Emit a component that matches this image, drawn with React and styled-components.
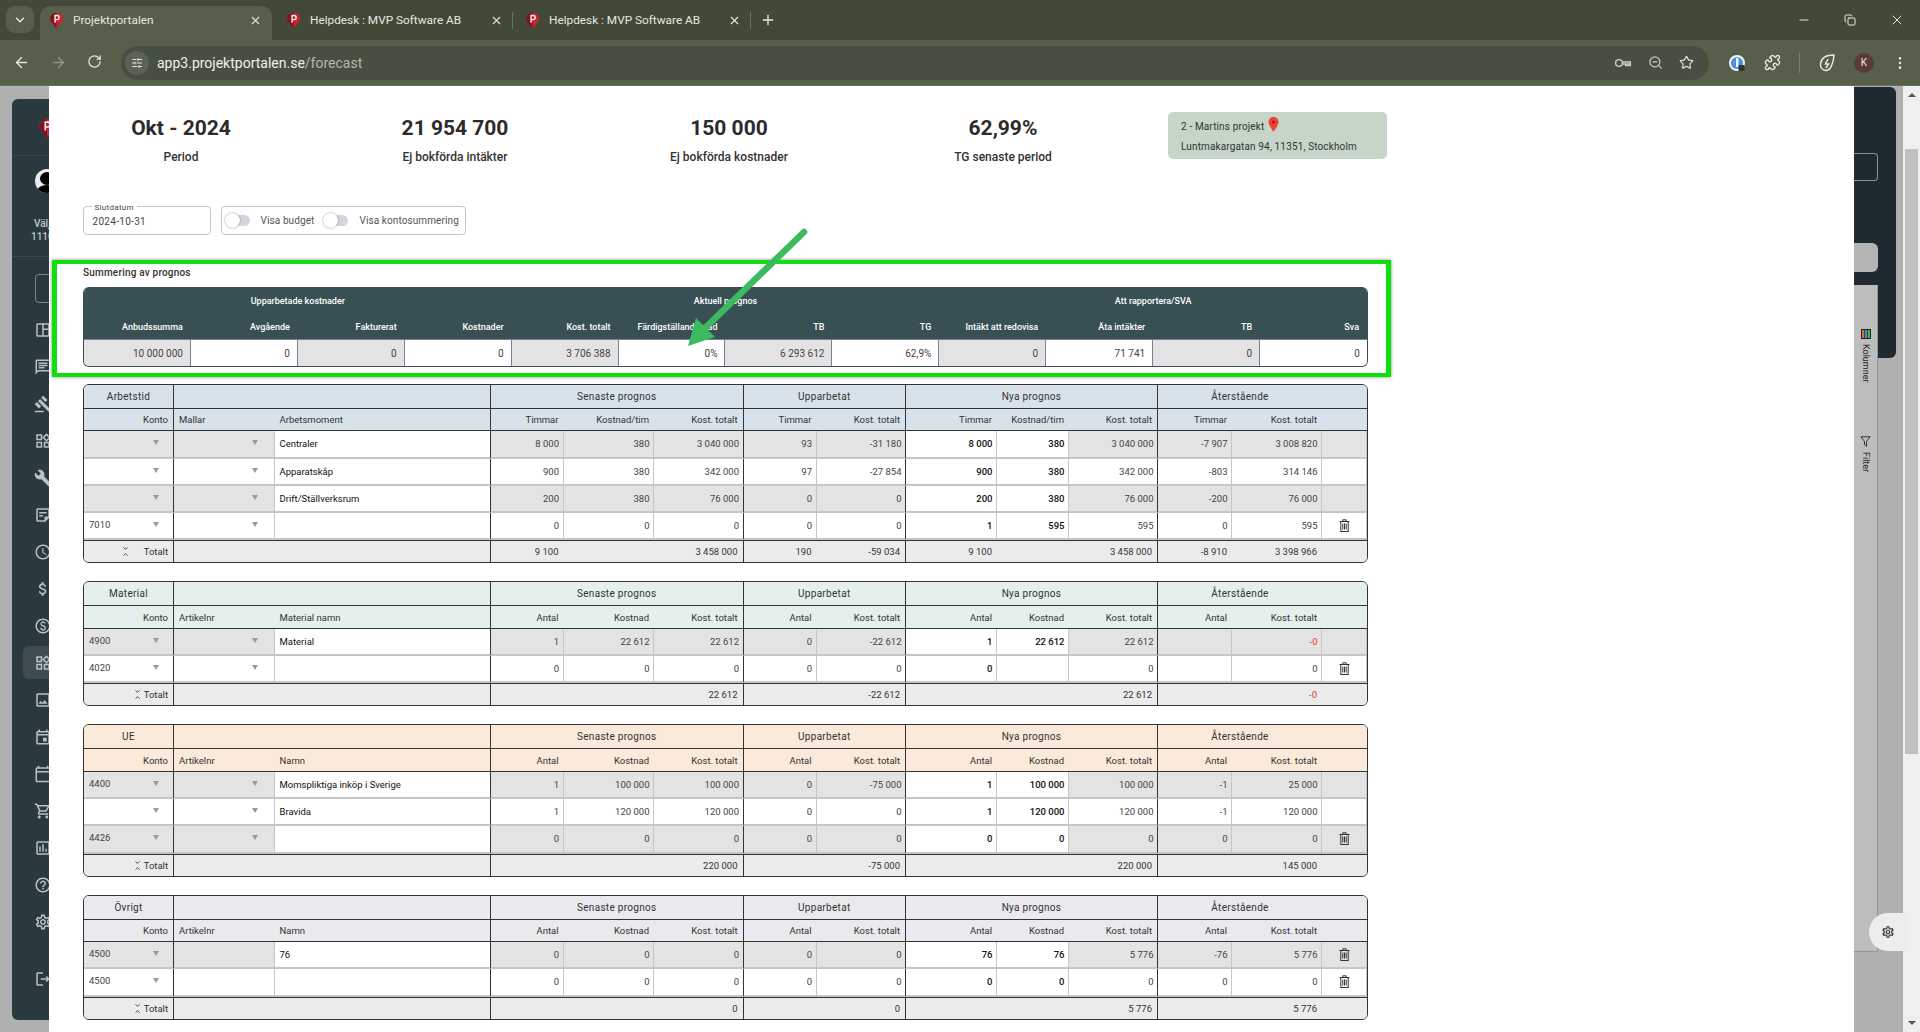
import styled, { createGlobalStyle } from "styled-components";
import {
  ArrowLeft,
  ArrowRight,
  ChevronDown,
  ChevronUp,
  Copy,
  EllipsisVertical,
  Minus,
  Plus,
  Puzzle,
  RotateCw,
  SlidersHorizontal,
  Star,
  X,
  ZoomOut,
} from "lucide-react";
import {
  MdAttachMoney,
  MdBuild,
  MdOutlineAccessTime,
  MdOutlineAssessment,
  MdOutlineCalendarToday,
  MdOutlineChat,
  MdOutlineEvent,
  MdOutlineGavel,
  MdOutlineHelpOutline,
  MdOutlineImage,
  MdOutlineLogout,
  MdOutlinePaid,
  MdOutlineSettings,
  MdOutlineShoppingCart,
  MdOutlineSpaceDashboard,
  MdOutlineStickyNote2,
  MdOutlineWidgets,
} from "react-icons/md";

const GlobalStyle = createGlobalStyle`
  html, body {
    margin: 0;
    height: 100%;
    overflow: hidden;
    font-family: Roboto, "Liberation Sans", sans-serif;
  }
  #root { height: 100%; }
`;

const Screen = styled.div`
  width: 1920px;
  height: 1032px;
  display: flex;
  flex-direction: column;
  overflow: hidden;
`;

/* browser chrome */
const TabStrip = styled.div`
  height: 40px;
  background: #424936;
  display: flex;
  align-items: flex-end;
  padding-left: 6px;
  color: #e6e8e0;
  flex-shrink: 0;
`;

const TabMenu = styled.div`
  width: 28px;
  height: 27px;
  margin: 0 6px 7px 0;
  border-radius: 9px;
  background: #555f49;
  display: flex;
  align-items: center;
  justify-content: center;
`;

const Tab = styled.div`
  width: ${({ $w }) => $w}px;
  height: 34px;
  padding: 0 10px 6px ${({ $pl }) => $pl || 8}px;
  box-sizing: border-box;
  display: flex;
  align-items: center;
  gap: 8px;
  font-size: 11.8px;
  border-radius: 10px 10px 0 0;
  background: ${({ $active }) => ($active ? "#555f49" : "transparent")};
  margin-right: ${({ $mr }) => $mr || 0}px;
  position: relative;
  &::after {
    content: "";
    display: ${({ $sep }) => ($sep ? "block" : "none")};
    position: absolute;
    right: 0;
    top: 6px;
    height: 17px;
    width: 1px;
    background: #6a7160;
  }
`;

const TabTitle = styled.span`
  flex: 1;
  white-space: nowrap;
`;

const NewTab = styled.div`
  margin: 0 0 12px 9px;
  display: flex;
`;

const WindowControls = styled.div`
  margin: 0 15px 12px auto;
  display: flex;
  gap: 33px;
  align-items: center;
`;

const Toolbar = styled.div`
  height: 46px;
  background: #555f49;
  display: flex;
  align-items: center;
  color: #e4e6de;
  flex-shrink: 0;
  border-bottom: 1px solid #6b7162;
  box-sizing: border-box;
`;

const NavButtons = styled.div`
  width: 121px;
  padding-left: 13px;
  box-sizing: border-box;
  display: flex;
  gap: 20px;
`;

const UrlBar = styled.div`
  width: 1588px;
  height: 34px;
  border-radius: 17px;
  background: #474f42;
  display: flex;
  align-items: center;
  padding: 0 15px 0 4px;
  box-sizing: border-box;
`;

const SiteInfo = styled.div`
  width: 24px;
  height: 24px;
  border-radius: 50%;
  background: #5a6255;
  display: flex;
  align-items: center;
  justify-content: center;
  margin-right: 8px;
`;

const UrlHost = styled.span`
  font-size: 14px;
  color: #f0f1ec;
`;

const UrlPath = styled.span`
  font-size: 14px;
  color: #b4b8ae;
`;

const UrlActions = styled.div`
  margin-left: auto;
  display: flex;
  gap: 16px;
  align-items: center;
`;

const ToolIcons = styled.div`
  display: flex;
  align-items: center;
  gap: 18px;
  padding-left: 19px;
`;

const ToolDivider = styled.div`
  width: 1px;
  height: 20px;
  background: #7a8070;
`;

const AvatarDot = styled.div`
  width: 20px;
  height: 20px;
  border-radius: 50%;
  background: #5b3b33;
  color: #f0e6e0;
  font-size: 10px;
  display: flex;
  align-items: center;
  justify-content: center;
`;

/* dimmed page behind the drawer */
const Viewport = styled.div`
  flex: 1;
  display: flex;
  min-height: 0;
  position: relative;
`;

const Backdrop = styled.div`
  flex: 1;
  background: #b0b0b0;
  display: flex;
  justify-content: space-between;
  padding-left: 12px;
`;

const Sidebar = styled.aside`
  width: 200px;
  margin: 13px 0 12px;
  background: #29393e;
  border-radius: 6px;
  color: #c3c9ca;
  display: flex;
  flex-direction: column;
`;

const SideLogo = styled.div`
  height: 57px;
  padding: 19px 0 0 25px;
  box-sizing: border-box;
  border-bottom: 1px solid #3a494e;
`;

const SideUser = styled.div`
  height: 101px;
  padding: 13px 0 0 19px;
  box-sizing: border-box;
  border-bottom: 1px solid #3a494e;
  font-size: 10px;
  font-weight: 500;
  line-height: 13px;
`;

const UserHead = styled.div`
  position: relative;
  width: 24px;
  height: 24px;
  margin: 0 0 24px 4px;
  border-radius: 50%;
  background: #ececec;
  overflow: hidden;
`;

const UserFace = styled.div`
  position: absolute;
  left: 5px;
  top: 3px;
  width: 14px;
  height: 13px;
  border-radius: 50%;
  background: #000;
`;

const UserBody = styled.div`
  position: absolute;
  left: 2px;
  top: 16px;
  width: 20px;
  height: 12px;
  border-radius: 50%;
  background: #000;
`;

const UserLine = styled.div`
  padding-left: ${({ $indent }) => $indent || 0}px;
`;

const SideSearch = styled.div`
  width: 100px;
  height: 29px;
  margin: 17px 0 8px 23px;
  border: 1px solid #7d8789;
  border-radius: 4px;
  box-sizing: border-box;
`;

const SideMenu = styled.div`
  display: flex;
  flex-direction: column;
`;

const SideItem = styled.div`
  display: flex;
  align-items: center;
  margin: ${({ $active }) => ($active ? "2px 0 2px 11px" : "0")};
  padding-left: ${({ $active }) => ($active ? "11px" : "22px")};
  height: ${({ $active }) => ($active ? "33px" : "37px")};
  background: ${({ $active }) => ($active ? "#3f4c50" : "transparent")};
  color: #b9c1c3;
  border-radius: 6px;
`;

const SideLogout = styled(SideItem)`
  margin-top: 20px;
`;

const RightColumn = styled.div`
  width: 49px;
  position: relative;
`;

const DarkPanel = styled.div`
  width: 42px;
  height: 271px;
  margin-top: 1px;
  padding-top: 66px;
  box-sizing: border-box;
  background: #1e2a30;
  border-radius: 0 6px 6px 0;
`;

const PanelSearch = styled.div`
  width: 24px;
  height: 28px;
  box-sizing: border-box;
  border: 1px solid #8c9498;
  border-left: none;
  border-radius: 0 4px 4px 0;
`;

const PanelBar = styled.div`
  width: 24px;
  height: 29px;
  margin-top: 62px;
  background: #b4b4b4;
  border-radius: 0 6px 6px 0;
`;

const ToolPanel = styled.div`
  position: absolute;
  left: 0;
  top: 199px;
  width: 24px;
  height: 667px;
  box-sizing: border-box;
  background: #bdbdbd;
  border-right: 1px solid #969696;
  border-bottom: 1px solid #969696;
  display: flex;
  flex-direction: column;
  align-items: center;
  padding-top: 44px;
  gap: 53px;
`;

const ToolTab = styled.div`
  writing-mode: vertical-rl;
  font-size: 9px;
  display: flex;
  align-items: center;
  gap: 5px;
  color: #222;
`;

const GearButton = styled.div`
  position: absolute;
  left: 15px;
  top: 827px;
  width: 38px;
  height: 38px;
  border-radius: 50% 0 0 50%;
  background: #ededed;
  display: flex;
  align-items: center;
  justify-content: center;
`;

const Scrollbar = styled.div`
  width: 17px;
  background: #efefef;
  display: flex;
  flex-direction: column;
  align-items: center;
  padding: 7px 0;
  box-sizing: border-box;
`;

const ScrollArrow = styled.div`
  width: 0;
  height: 0;
  border-left: 4px solid transparent;
  border-right: 4px solid transparent;
  border-${({ $dir }) => ($dir === "up" ? "bottom" : "top")}: 4px solid #555;
  margin-top: ${({ $dir }) => ($dir === "up" ? "0" : "auto")};
`;

const ScrollThumb = styled.div`
  width: 13px;
  height: 605px;
  background: #bfbfbf;
  margin-top: 52px;
`;

/* drawer */
const Drawer = styled.main`
  position: absolute;
  left: 49px;
  top: 0;
  width: 1805px;
  bottom: 0;
  background: #fff;
  overflow: hidden;
  padding: 26px 0 0 34px;
  box-sizing: border-box;
  color: #333;
`;

const StatsRow = styled.div`
  display: flex;
  align-items: flex-start;
  margin-left: 16px;
  height: 53px;
`;

const Stat = styled.div`
  width: 164px;
  margin-right: 110px;
  padding-top: 1px;
  text-align: center;
  &:nth-child(4) {
    margin-right: 83px;
  }
`;

const StatValue = styled.div`
  font-size: 21px;
  line-height: 30px;
  font-weight: 700;
  color: #2e2a2a;
`;

const StatLabel = styled.div`
  margin-top: 7px;
  font-size: 12px;
  line-height: 14px;
  font-weight: 500;
`;

const ProjectCard = styled.div`
  width: 219px;
  height: 47px;
  background: #c5d5c8;
  border-radius: 5px;
  padding: 5px 13px;
  box-sizing: border-box;
  font-size: 10px;
  letter-spacing: 0.14px;
  color: #333;
  display: flex;
  flex-direction: column;
  gap: 7px;
`;

const ProjectName = styled.div`
  display: flex;
  align-items: flex-start;
  gap: 4px;
  height: 17px;
  line-height: 19px;
`;

const FilterRow = styled.div`
  display: flex;
  gap: 10px;
  margin: 41px 0 0 -0.5px;
`;

const DateField = styled.div`
  position: relative;
  width: 128px;
  height: 29px;
  box-sizing: border-box;
  border: 1px solid #c4c4c4;
  border-radius: 4px;
  padding: 8px 0 0 9px;
  font-size: 10px;
  letter-spacing: 0.3px;
  line-height: 13px;
  color: #444;
`;

const DateLabel = styled.span`
  position: absolute;
  left: 8px;
  top: -4px;
  padding: 0 3px;
  background: #fff;
  font-size: 8px;
  line-height: 9px;
`;

const SwitchBox = styled.div`
  width: 245px;
  height: 29px;
  box-sizing: border-box;
  border: 1px solid #c4c4c4;
  border-radius: 4px;
  display: flex;
  align-items: center;
  padding-left: 3px;
  font-size: 10px;
  letter-spacing: 0.1px;
  color: #555;
`;

const SwitchTrack = styled.div`
  position: relative;
  width: 24px;
  height: 11px;
  border-radius: 6px;
  background: #d4d4dc;
  margin: 0 11px 0 1px;
`;

const SwitchThumb = styled.div`
  position: absolute;
  left: -1px;
  top: -2px;
  width: 15px;
  height: 15px;
  border-radius: 50%;
  background: #fff;
  box-shadow: 0 0 2px rgba(0, 0, 0, 0.45);
`;

const SwitchText = styled.span`
  margin-right: ${({ $mr }) => $mr || 0}px;
`;

const SummarySection = styled.section`
  position: relative;
  width: 1285px;
  margin-top: 30px;
  padding-top: 1px;
`;

const SummaryTitle = styled.div`
  font-size: 10px;
  line-height: 14px;
  font-weight: 500;
  letter-spacing: 0.2px;
  color: #333;
  height: 21px;
`;

const SummaryGrid = styled.div`
  display: grid;
  grid-template-columns: repeat(12, 1fr);
  grid-template-rows: 27px 26px 27px;
  border-radius: 6px;
  overflow: hidden;
  border: 1px solid #384f54;
  border-top: none;
  box-sizing: border-box;
  height: 80px;
`;

const SummaryGroup = styled.div`
  grid-column: span 4;
  background: #384f54;
  color: #fff;
  font-size: 9px;
  font-weight: 500;
  display: flex;
  align-items: center;
  justify-content: center;
`;

const SummaryLabel = styled.div`
  background: #384f54;
  color: #fff;
  font-size: 9px;
  font-weight: 500;
  display: flex;
  align-items: center;
  justify-content: flex-end;
  padding-right: 8px;
  border-bottom: 1px solid #7c7f9c;
`;

const SummaryValue = styled.div`
  background: ${({ $grey }) => ($grey ? "#e3e3e3" : "#fff")};
  border-right: 1.5px solid #7c7f9c;
  border-bottom: 1px solid #7c7f9c;
  font-size: 10px;
  color: #444;
  display: flex;
  align-items: center;
  justify-content: flex-end;
  padding-right: 7px;
  &:last-child {
    border-right: none;
  }
`;

const GreenFrame = styled.div`
  position: absolute;
  left: -31px;
  right: -23px;
  top: -5px;
  bottom: -10px;
  border: solid #0de00d;
  border-width: 4px 5px;
  box-shadow: 0 0 3px rgba(0, 0, 0, 0.5);
  pointer-events: none;
`;

const ArrowMark = styled.svg`
  position: absolute;
  left: 598px;
  top: -40px;
  pointer-events: none;
  overflow: visible;
`;

const TableStack = styled.div`
  margin-top: 17px;
  display: flex;
  flex-direction: column;
  gap: 18.2px;
`;

const TableGrid = styled.div`
  width: 1285px;
  box-sizing: border-box;
  display: grid;
  grid-template-columns: 90px 100.5px 216.5px 72.5px 90.5px 89.5px 73px 89.5px 91px 72px 89px 74px 90px 45px;
  grid-template-rows: 24px 22.3px repeat(${({ $rows }) => $rows}, 27.25px) 22px;
  border: 1px solid #333;
  border-radius: 6px;
  overflow: hidden;
  font-size: 9.5px;
`;

const HeadCell = styled.div`
  grid-column: span ${({ $span }) => $span || 1};
  background: ${({ $tint }) => $tint};
  border-right: ${({ $end }) => ($end ? "1px solid #333" : "none")};
  border-bottom: 1px solid #333;
  color: #333;
  display: flex;
  align-items: center;
  justify-content: ${({ $align }) => $align || "flex-end"};
  padding: 0 5px;
  box-sizing: border-box;
  min-width: 0;
  white-space: nowrap;
`;

const GroupCell = styled(HeadCell)`
  font-size: 10px;
  letter-spacing: 0.3px;
  justify-content: center;
`;

const BodyCell = styled.div`
  background: ${({ $grey }) => ($grey ? "#e3e3e3" : "#fff")};
  border-right: ${({ $end }) => ($end ? "1px solid #333" : "1.5px solid #c9c5c5")};
  border-bottom: 2px solid #c9c5c5;
  color: ${({ $red, $strong, $ink }) => ($red ? "#e53935" : $strong || $ink ? "#111" : "#444")};
  font-weight: ${({ $strong }) => ($strong ? 500 : 400)};
  display: flex;
  align-items: center;
  justify-content: ${({ $align }) => $align || "flex-end"};
  padding: 0 3.5px 0 5px;
  box-sizing: border-box;
  min-width: 0;
  white-space: nowrap;
`;

const SelectCell = styled(BodyCell)`
  justify-content: space-between;
  padding: 0 ${({ $arrowPad }) => $arrowPad}px 2px 5px;
`;

const CaretDown = styled.span`
  width: 0;
  height: 0;
  border-left: 3.5px solid transparent;
  border-right: 3.5px solid transparent;
  border-top: 5px solid #9a9a9a;
  margin-left: auto;
`;

const TotalCell = styled.div`
  grid-column: span ${({ $span }) => $span || 1};
  background: #ebebeb;
  border-right: ${({ $end }) => ($end ? "1px solid #333" : "none")};
  border-top: 1px solid #333;
  color: ${({ $red }) => ($red ? "#e53935" : "#333")};
  display: flex;
  align-items: center;
  justify-content: flex-end;
  padding: 0 5px;
  box-sizing: border-box;
  white-space: nowrap;
`;

const CollapseMark = styled.span`
  display: flex;
  flex-direction: column;
  margin-right: ${({ $gap }) => $gap}px;
  color: #333;
`;

const TrashMark = styled.svg`
  margin: auto;
  display: block;
`;

const Pin = ({ size = 14 }) => (
  <svg width={size} height={size} viewBox="0 0 24 24">
    <path d="M12 1C6.600 1 3 5 3 9.500 3 12 4.200 14.500 7 17l5 6 5-6c2.800-2.500 4-5 4-7.500C21 5 17.400 1 12 1z" fill="#d0222c" />
    <path d="M3 9.500C3 12 4.200 14.500 7 17l5 6V1C6.600 1 3 5 3 9.500z" fill="#7e1520" />
    <path d="M10 15V5h2.800a2.800 2.800 0 0 1 0 5.800H10" fill="none" stroke="#f3f3f3" strokeWidth="2" />
  </svg>
);

const KeyIcon = () => (
  <svg width="18" height="18" viewBox="0 0 18 18" fill="none" stroke="#c9ccc4" strokeWidth="1.4">
    <circle cx="5" cy="9" r="3.400" />
    <path d="M8.400 8h8v3.500h-1.600V10h-1.600v1.500h-1.600V10H8.400" />
  </svg>
);

const BlueExt = () => (
  <svg width="18" height="20" viewBox="0 0 18 20">
    <circle cx="9" cy="10" r="8" fill="#f2f4f8" />
    <circle cx="9" cy="10" r="6" fill="#4a90e8" />
    <rect x="8" y="5" width="2.400" height="9" fill="#fff" />
    <rect x="10.500" y="12" width="6" height="6" rx="1" fill="#333" />
  </svg>
);

const LeafExt = () => (
  <svg width="18" height="20" viewBox="0 0 18 20" fill="none" stroke="#e6e8e0" strokeWidth="1.500">
    <path d="M16 2C8 2 3 5 2.500 11c-.2 3 1.500 6 5 6.500C12 18 15.500 11 16 2z" />
    <path d="M10 6 7.500 11h3L8 15" />
  </svg>
);

const ColumnsGlyph = () => (
  <svg width="10" height="10" viewBox="0 0 10 10">
    <rect width="10" height="10" fill="#222" />
    <rect x="1" y="1" width="2.200" height="8" fill="#e0683c" />
    <rect x="3.900" y="1" width="2.200" height="8" fill="#3f8fd2" />
    <rect x="6.800" y="1" width="2.200" height="8" fill="#4caf50" />
  </svg>
);

const FilterGlyph = () => (
  <svg width="11" height="11" viewBox="0 0 11 11" fill="none" stroke="#222" strokeWidth="0.9">
    <path d="M1 .8h9L6.500 5.500v4.700L4.500 8.600V5.500z" />
  </svg>
);

const Trash = () => (
  <TrashMark width="11" height="13" viewBox="0 0 11 13" fill="none" stroke="#333" strokeWidth="1">
    <path d="M.5 2.500h10M3.800 2.500V.8h3.400v1.700" />
    <rect x="1.800" y="2.500" width="7.400" height="10" />
    <path d="M3.800 4.500v6M5.500 4.500v6M7.200 4.500v6" />
  </TrashMark>
);

const Collapse = ({ gap }) => (
  <CollapseMark $gap={gap}>
    <ChevronDown size={7} strokeWidth={3} style={{ marginBottom: -1 }} />
    <ChevronUp size={7} strokeWidth={3} />
  </CollapseMark>
);

const sideIcons = [
  MdOutlineSpaceDashboard,
  MdOutlineChat,
  MdOutlineGavel,
  MdOutlineWidgets,
  MdBuild,
  MdOutlineStickyNote2,
  MdOutlineAccessTime,
  MdAttachMoney,
  MdOutlinePaid,
  MdOutlineWidgets,
  MdOutlineImage,
  MdOutlineEvent,
  MdOutlineCalendarToday,
  MdOutlineShoppingCart,
  MdOutlineAssessment,
  MdOutlineHelpOutline,
  MdOutlineSettings,
];

const stats = [
  ["Okt - 2024", "Period"],
  ["21 954 700", "Ej bokförda intäkter"],
  ["150 000", "Ej bokförda kostnader"],
  ["62,99%", "TG senaste period"],
];

const summaryLabels = [
  "Anbudssumma",
  "Avgående",
  "Fakturerat",
  "Kostnader",
  "Kost. totalt",
  "Färdigställandegrad",
  "TB",
  "TG",
  "Intäkt att redovisa",
  "Äta intäkter",
  "TB",
  "Sva",
];

const summaryValues = ["10 000 000", "0", "0", "0", "3 706 388", "0%", "6 293 612", "62,9%", "0", "71 741", "0", "0"];
const summaryGrey = [true, false, true, false, true, false, true, false, true, false, true, false];

const tables = [
  {
    title: "Arbetstid",
    tint: "#d8e2ea",
    second: "Mallar",
    third: "Arbetsmoment",
    unit: "Timmar",
    price: "Kostnad/tim",
    collapseGap: 14.5,
    rows: [
      ["", "Centraler", "8 000", "380", "3 040 000", "93", "-31 180", "8 000", "380", "3 040 000", "-7 907", "3 008 820", false],
      ["", "Apparatskåp", "900", "380", "342 000", "97", "-27 854", "900", "380", "342 000", "-803", "314 146", false],
      ["", "Drift/Ställverksrum", "200", "380", "76 000", "0", "0", "200", "380", "76 000", "-200", "76 000", false],
      ["7010", "", "0", "0", "0", "0", "0", "1", "595", "595", "0", "595", true],
    ],
    total: ["9 100", "", "3 458 000", "190", "-59 034", "9 100", "", "3 458 000", "-8 910", "3 398 966"],
  },
  {
    title: "Material",
    tint: "#e5efec",
    second: "Artikelnr",
    third: "Material namn",
    unit: "Antal",
    price: "Kostnad",
    collapseGap: 3,
    rows: [
      ["4900", "Material", "1", "22 612", "22 612", "0", "-22 612", "1", "22 612", "22 612", "", "-0", false],
      ["4020", "", "0", "0", "0", "0", "0", "0", "", "0", "", "0", true],
    ],
    total: ["", "", "22 612", "", "-22 612", "", "", "22 612", "", "-0"],
  },
  {
    title: "UE",
    tint: "#fbe9d9",
    second: "Artikelnr",
    third: "Namn",
    unit: "Antal",
    price: "Kostnad",
    collapseGap: 3,
    rows: [
      ["4400", "Momspliktiga inköp i Sverige", "1", "100 000", "100 000", "0", "-75 000", "1", "100 000", "100 000", "-1", "25 000", false],
      ["", "Bravida", "1", "120 000", "120 000", "0", "0", "1", "120 000", "120 000", "-1", "120 000", false],
      ["4426", "", "0", "0", "0", "0", "0", "0", "0", "0", "0", "0", true],
    ],
    total: ["", "", "220 000", "", "-75 000", "", "", "220 000", "", "145 000"],
  },
  {
    title: "Övrigt",
    tint: "#eae9ee",
    second: "Artikelnr",
    third: "Namn",
    unit: "Antal",
    price: "Kostnad",
    collapseGap: 3,
    plainSecond: true,
    rows: [
      ["4500", "76", "0", "0", "0", "0", "0", "76", "76", "5 776", "-76", "5 776", true],
      ["4500", "", "0", "0", "0", "0", "0", "0", "0", "0", "0", "0", true],
    ],
    total: ["", "", "0", "", "0", "", "", "5 776", "", "5 776"],
  },
];

const ForecastRow = ({ row, grey, plainSecond }) => {
  const [konto, name, ...rest] = row;
  const trash = rest[rest.length - 1];
  const numbers = rest.slice(0, 10);
  return (
    <>
      <SelectCell $grey={grey} $end $arrowPad={14}>
        {konto}
        <CaretDown />
      </SelectCell>
      <SelectCell $grey={grey} $arrowPad={16}>
        {!plainSecond && <CaretDown />}
      </SelectCell>
      <BodyCell $align="flex-start" $end $ink>
        {name}
      </BodyCell>
      {numbers.map((value, i) => (
        <BodyCell
          key={i}
          $grey={grey && i !== 5 && i !== 6}
          $strong={i === 5 || i === 6}
          $end={i === 2 || i === 4 || i === 7}
          $red={value === "-0"}
        >
          {value}
        </BodyCell>
      ))}
      <BodyCell $grey={grey}>{trash && <Trash />}</BodyCell>
    </>
  );
};

const ForecastTable = ({ table }) => {
  const { title, tint, second, third, unit, price, rows, total, collapseGap, plainSecond } = table;
  const subLabels = [unit, price, "Kost. totalt", unit, "Kost. totalt", unit, price, "Kost. totalt", unit, "Kost. totalt"];
  return (
    <TableGrid $rows={rows.length}>
      <GroupCell $tint={tint} $end>{title}</GroupCell>
      <GroupCell $tint={tint} $span={2} $end />
      <GroupCell $tint={tint} $span={3} $end>Senaste prognos</GroupCell>
      <GroupCell $tint={tint} $span={2} $end>Upparbetat</GroupCell>
      <GroupCell $tint={tint} $span={3} $end>Nya prognos</GroupCell>
      <GroupCell $tint={tint} $span={2}>Återstående</GroupCell>
      <GroupCell $tint={tint} />

      <HeadCell $tint={tint} $end>Konto</HeadCell>
      <HeadCell $tint={tint} $align="flex-start">{second}</HeadCell>
      <HeadCell $tint={tint} $align="flex-start" $end>{third}</HeadCell>
      {subLabels.map((label, i) => (
        <HeadCell key={i} $tint={tint} $end={i === 2 || i === 4 || i === 7}>
          {label}
        </HeadCell>
      ))}
      <HeadCell $tint={tint} />

      {rows.map((row, i) => (
        <ForecastRow key={i} row={row} grey={i % 2 === 0} plainSecond={plainSecond} />
      ))}

      <TotalCell $end>
        <Collapse gap={collapseGap} />
        Totalt
      </TotalCell>
      <TotalCell $span={2} $end />
      {total.map((value, i) => (
        <TotalCell key={i} $end={i === 2 || i === 4 || i === 7} $red={value === "-0"}>
          {value}
        </TotalCell>
      ))}
      <TotalCell />
    </TableGrid>
  );
};

const App = () => (
  <Screen>
    <GlobalStyle />
    <TabStrip>
      <TabMenu>
        <ChevronDown size={14} strokeWidth={2.5} />
      </TabMenu>
      <Tab $active $w={232} $mr={6}>
        <Pin size={17} />
        <TabTitle>Projektportalen</TabTitle>
        <X size={13} />
      </Tab>
      <Tab $w={235} $sep $pl={7}>
        <Pin size={17} />
        <TabTitle>Helpdesk : MVP Software AB</TabTitle>
        <X size={13} />
      </Tab>
      <Tab $w={238} $sep $pl={11}>
        <Pin size={17} />
        <TabTitle>Helpdesk : MVP Software AB</TabTitle>
        <X size={13} />
      </Tab>
      <NewTab>
        <Plus size={16} />
      </NewTab>
      <WindowControls>
        <Minus size={14} />
        <Copy size={12} />
        <X size={16} strokeWidth={1.5} />
      </WindowControls>
    </TabStrip>

    <Toolbar>
      <NavButtons>
        <ArrowLeft size={17} />
        <ArrowRight size={17} color="#8f9587" />
        <RotateCw size={15} />
      </NavButtons>
      <UrlBar>
        <SiteInfo>
          <SlidersHorizontal size={12} />
        </SiteInfo>
        <UrlHost>app3.projektportalen.se</UrlHost>
        <UrlPath>/forecast</UrlPath>
        <UrlActions>
          <KeyIcon />
          <ZoomOut size={15} color="#c9ccc4" />
          <Star size={15} color="#d8dad3" />
        </UrlActions>
      </UrlBar>
      <ToolIcons>
        <BlueExt />
        <Puzzle size={17} />
        <ToolDivider />
        <LeafExt />
        <AvatarDot>K</AvatarDot>
        <EllipsisVertical size={16} />
      </ToolIcons>
    </Toolbar>

    <Viewport>
      <Backdrop>
        <Sidebar>
          <SideLogo>
            <Pin size={20} />
          </SideLogo>
          <SideUser>
            <UserHead>
              <UserFace />
              <UserBody />
            </UserHead>
            <UserLine $indent={3}>Välj</UserLine>
            <UserLine>1110</UserLine>
          </SideUser>
          <SideSearch />
          <SideMenu>
            {sideIcons.map((Icon, i) => (
              <SideItem key={i} $active={i === 9}>
                <Icon size={18} />
              </SideItem>
            ))}
            <SideLogout>
              <MdOutlineLogout size={18} />
            </SideLogout>
          </SideMenu>
        </Sidebar>
        <RightColumn>
          <DarkPanel>
            <PanelSearch />
            <PanelBar />
          </DarkPanel>
          <ToolPanel>
            <ToolTab>
              <ColumnsGlyph />
              Kolumner
            </ToolTab>
            <ToolTab>
              <FilterGlyph />
              Filter
            </ToolTab>
          </ToolPanel>
          <GearButton>
            <MdOutlineSettings size={14} color="#333" />
          </GearButton>
        </RightColumn>
      </Backdrop>
      <Scrollbar>
        <ScrollArrow $dir="up" />
        <ScrollThumb />
        <ScrollArrow $dir="down" />
      </Scrollbar>

      <Drawer>
        <StatsRow>
          {stats.map(([value, label]) => (
            <Stat key={label}>
              <StatValue>{value}</StatValue>
              <StatLabel>{label}</StatLabel>
            </Stat>
          ))}
          <ProjectCard>
            <ProjectName>
              2 - Martins projekt
              <svg width="11" height="15" viewBox="0 0 11 15">
                <path d="M5.500 0C2.400 0 .5 2.200.5 5c0 3 3 6.600 5 10 2-3.400 5-7 5-10 0-2.800-1.900-5-5-5z" fill="#ef4136" />
                <circle cx="5.500" cy="5" r="1.500" fill="#a81c14" />
              </svg>
            </ProjectName>
            <div>Luntmakargatan 94, 11351, Stockholm</div>
          </ProjectCard>
        </StatsRow>

        <FilterRow>
          <DateField>
            <DateLabel>Slutdatum</DateLabel>
            2024-10-31
          </DateField>
          <SwitchBox>
            <SwitchTrack>
              <SwitchThumb />
            </SwitchTrack>
            <SwitchText $mr={9}>Visa budget</SwitchText>
            <SwitchTrack>
              <SwitchThumb />
            </SwitchTrack>
            <SwitchText>Visa kontosummering</SwitchText>
          </SwitchBox>
        </FilterRow>

        <SummarySection>
          <SummaryTitle>Summering av prognos</SummaryTitle>
          <SummaryGrid>
            <SummaryGroup>Upparbetade kostnader</SummaryGroup>
            <SummaryGroup>Aktuell prognos</SummaryGroup>
            <SummaryGroup>Att rapportera/SVA</SummaryGroup>
            {summaryLabels.map((label, i) => (
              <SummaryLabel key={i}>{label}</SummaryLabel>
            ))}
            {summaryValues.map((value, i) => (
              <SummaryValue key={i} $grey={summaryGrey[i]}>
                {value}
              </SummaryValue>
            ))}
          </SummaryGrid>
          <GreenFrame />
          <ArrowMark width="130" height="130" viewBox="0 0 130 130">
            <path d="M123 7 L20 107" stroke="#3dba5f" strokeWidth="6.500" strokeLinecap="round" />
            <path d="M7 121 L15 93 L34 112 Z" fill="#3dba5f" />
          </ArrowMark>
        </SummarySection>

        <TableStack>
          {tables.map((table) => (
            <ForecastTable key={table.title} table={table} />
          ))}
        </TableStack>
      </Drawer>
    </Viewport>
  </Screen>
);

export default App;
